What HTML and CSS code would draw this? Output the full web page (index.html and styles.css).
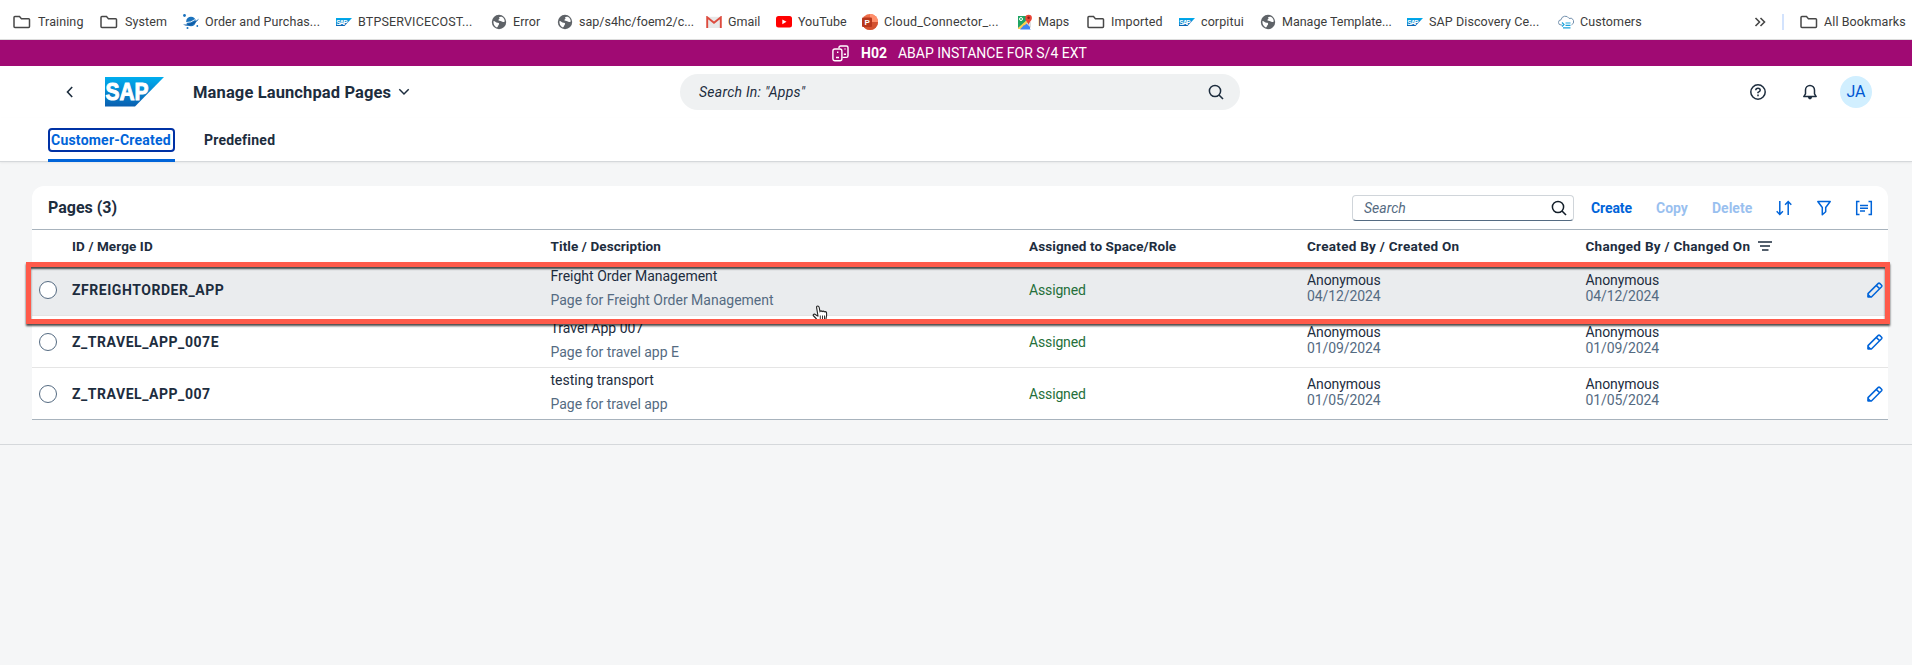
FILE: index.html
```
<!DOCTYPE html>
<html lang="en">
<head>
<meta charset="utf-8">
<title>Manage Launchpad Pages</title>
<link rel="stylesheet" href="styles.css">
</head>
<body>
<svg class="defs" width="0" height="0" aria-hidden="true">
  <defs>
    <linearGradient id="sapblue" x1="0" y1="0" x2="0" y2="1"><stop offset="0" stop-color="#00aeef"/><stop offset="1" stop-color="#0a5fb0"/></linearGradient>
    <symbol id="folder" viewBox="0 0 18 14"><path d="M1.900 1.600h4.600l1.900 2.100h7.200q.9 0 .9.9v6.900q0 .9-.9.900H1.900q-.9 0-.9-.9V2.500q0-.9.9-.9z" fill="none" stroke="#474747" stroke-width="1.500"/></symbol>
    <symbol id="globe" viewBox="0 0 16 16"><circle cx="8" cy="8" r="7.200" fill="#5f6368"/><path d="M2.500 7c2 .2 2.400 2 4.200 1.800 1.600-.1 1.800 1.400.8 2.400-.8.700-.4 1.700-1.700 2.200C3.600 12.400 2 10 2.500 7zM8 3.300c1.200-.9 2.400-.7 3.200-.2 1.600 1 2.600 2.700 2.500 4.400-1 1-2.500.6-3.400-.2-1-.6-2.800 0-2.800-1.300.1-1 .9-1 1.200-1.500-.2-.4-.6-.6-.7-1.200z" fill="#fff"/></symbol>
    <symbol id="minisap" viewBox="0 0 16 8"><path d="M0 0h16L8.500 8H0z" fill="url(#sapblue)"/><text x=".3" y="6.500" font-size="6.500" font-weight="900" fill="#fff" textLength="11.500" font-family="Liberation Sans">SAP</text></symbol>
    <symbol id="pencil" viewBox="0 0 16 16"><path d="M1 15v-3.400L11.300 1.400q.7-.6 1.400 0l1.900 1.900q.6.700 0 1.400L4.400 15zM9.300 3.400l3.300 3.300" fill="none" stroke="#0064d9" stroke-width="1.500" stroke-linejoin="round"/><path d="M1 11.500L4.500 15H.6z" fill="#0064d9"/></symbol>
    <symbol id="lens" viewBox="0 0 16 16"><circle cx="7" cy="7" r="5.600" fill="none" stroke="currentColor" stroke-width="1.500"/><path d="M11 11l4 4" stroke="currentColor" stroke-width="1.600"/></symbol>
  </defs>
</svg>
<nav class="bookmarks">
  <a class="bm w1"><svg width="18" height="14"><use href="#folder"/></svg><span>Training</span></a>
  <a class="bm w2"><svg width="18" height="14"><use href="#folder"/></svg><span>System</span></a>
  <a class="bm w3"><svg width="16" height="16" viewBox="0 0 16 16"><circle cx="8" cy="7.500" r="4.800" fill="#1b72bd"/><path d="M0 10.500C4 11 12 8.500 16 4.500 13 9.500 6 14 0 10.500z" fill="#0d5aa5"/><path d="M3 8.600q5 0 9-3" stroke="#fff" stroke-width=".9" fill="none"/><circle cx="1.500" cy="1.500" r="1.400" fill="#1b72bd"/><circle cx="4.500" cy="14" r="1" fill="#1b72bd"/><circle cx="14.300" cy="12" r=".9" fill="#1b72bd"/></svg><span>Order and Purchas...</span></a>
  <a class="bm w4"><svg width="16" height="8"><use href="#minisap"/></svg><span>BTPSERVICECOST...</span></a>
  <a class="bm w5"><svg width="16" height="16"><use href="#globe"/></svg><span>Error</span></a>
  <a class="bm w6"><svg width="16" height="16"><use href="#globe"/></svg><span>sap/s4hc/foem2/c...</span></a>
  <a class="bm w7"><svg width="16" height="12" viewBox="0 0 16 12"><path d="M1 .8h14V12H1z" fill="#e8e8e8"/><path d="M1.200 12V1.300L8 6.800l6.800-5.500V12" fill="none" stroke="#dd4b3e" stroke-width="1.900"/></svg><span>Gmail</span></a>
  <a class="bm w8"><svg width="16" height="12" viewBox="0 0 16 12"><rect width="16" height="11.500" rx="2.500" fill="#f00"/><path d="M6.300 3.400v4.800l4.200-2.400z" fill="#fff"/></svg><span>YouTube</span></a>
  <a class="bm w9"><svg width="16" height="16" viewBox="0 0 16 16"><circle cx="8" cy="8" r="8" fill="#ed6c47"/><path d="M8 0a8 8 0 0 1 8 8H8z" fill="#ff8f6b"/><path d="M0 8h16a8 8 0 0 1-16 0z" fill="#d35230"/><rect y="3.500" width="10" height="9.500" rx="1" fill="#b7371c"/><text x="2.400" y="11" font-size="8" font-weight="700" fill="#fff" font-family="Liberation Sans">P</text></svg><span>Cloud_Connector_...</span></a>
  <a class="bm w10"><svg width="16" height="16" viewBox="0 0 16 16"><path d="M1 2h12v13H1z" fill="#4285f4"/><path d="M1 2h9L8 8l-7 6z" fill="#1fa463"/><path d="M1 14L12 4v3l-8 8H1z" fill="#ffd04b"/><path d="M7 11l7 4.500H3z" fill="#4285f4"/><path d="M9 9l5 5V8z" fill="#ddd"/><circle cx="4" cy="5" r="1.500" fill="none" stroke="#fff"/><path d="M11.500 11C11 8 8.300 7 8.300 4a3.300 3.300 0 0 1 6.600 0c0 3-2.900 4-3.400 7z" fill="#ea4335"/><circle cx="11.600" cy="3.800" r="1.200" fill="#8c1d18"/></svg><span>Maps</span></a>
  <a class="bm w11"><svg width="18" height="14"><use href="#folder"/></svg><span>Imported</span></a>
  <a class="bm w12"><svg width="16" height="8"><use href="#minisap"/></svg><span>corpitui</span></a>
  <a class="bm w13"><svg width="16" height="16"><use href="#globe"/></svg><span>Manage Template...</span></a>
  <a class="bm w14"><svg width="16" height="8"><use href="#minisap"/></svg><span>SAP Discovery Ce...</span></a>
  <a class="bm w15"><svg width="16" height="14" viewBox="0 0 16 14"><path d="M4 10H3.200A2.600 2.600 0 0 1 3 4.800 4.300 4.300 0 0 1 11 3.400 3.400 3.400 0 0 1 13.500 9.800" fill="none" stroke="#7390ad" stroke-width="1"/><path d="M4 7.500l2 2-2 2M7.500 8h5M7.500 10.300h5M5 12.800h7.500" fill="none" stroke="#1ba3dc" stroke-width="1.200"/></svg><span>Customers</span></a>
  <svg class="more" width="12" height="10" viewBox="0 0 12 10"><path d="M1.500 1l4 4-4 4M6.500 1l4 4-4 4" fill="none" stroke="#474747" stroke-width="1.600"/></svg>
  <i class="bar"></i>
  <a class="bm w16"><svg width="18" height="14"><use href="#folder"/></svg><span>All Bookmarks</span></a>
</nav>
<div class="banner">
  <svg width="17" height="17" viewBox="0 0 17 17" fill="none" stroke="#fff" stroke-width="1.400"><rect x=".9" y="4" width="9" height="11.800" rx="2"/><path d="M7 3.300V2.600Q7 1 8.600 1h5.800Q16 1 16 2.600v8.200q0 1.600-1.600 1.600H10.500M4 12.500h3M11.800 9.300h2.200M5 7.200h1.400M12.500 4h1"/></svg>
  <b>H02</b><span>ABAP INSTANCE FOR S/4 EXT</span>
</div>
<header class="shell">
  <div class="left">
    <svg class="back" width="8" height="12" viewBox="0 0 8 12"><path d="M6.200 1L1.500 6l4.700 5" fill="none" stroke="#1d2d3e" stroke-width="1.600"/></svg>
    <svg class="logo" width="59" height="30" viewBox="0 0 59 30"><path d="M0 0h59L30 29.500H0z" fill="url(#sapblue)"/><text x="0.500" y="23" font-size="24" font-weight="900" fill="#fff" stroke="#fff" stroke-width="1" textLength="43" lengthAdjust="spacingAndGlyphs" font-family="Liberation Sans">SAP</text></svg>
    <h1>Manage Launchpad Pages</h1>
    <svg class="chev" width="12" height="8" viewBox="0 0 12 8"><path d="M1.300 1.200L6 6l4.700-4.800" fill="none" stroke="#1d2d3e" stroke-width="1.500"/></svg>
  </div>
  <div class="bigsearch"><span>Search In: "Apps"</span><svg width="16" height="16"><use href="#lens"/></svg></div>
  <div class="right">
    <svg width="16" height="16" viewBox="0 0 16 16" fill="none" stroke="#1d2d3e" stroke-width="1.500"><circle cx="8" cy="8" r="7.200"/><path d="M5.800 6.200Q5.800 4.300 8 4.300t2.200 1.900Q10.200 7.500 8 8.400v.8M8 10.600v1.600"/></svg>
    <svg class="bell" width="16" height="16" viewBox="0 0 16 16"><path d="M1.800 12.600h12.400L12.500 9.800V6a4.500 4.500 0 0 0-9 0v3.800z" fill="none" stroke="#1d2d3e" stroke-width="1.500" stroke-linejoin="round"/><path d="M5.800 13h4.400q-.4 2.400-2.200 2.400T5.800 13z" fill="#1d2d3e"/></svg>
    <div class="avatar">JA</div>
  </div>
</header>
<div class="tabs">
  <div class="tab active"><span>Customer-Created</span></div>
  <div class="tab"><span>Predefined</span></div>
</div>
<main>
  <section class="card">
    <div class="toolbar">
      <h2>Pages (3)</h2>
      <div class="search"><span>Search</span><svg width="16" height="16"><use href="#lens"/></svg></div>
      <span class="btn create">Create</span><span class="btn off copy">Copy</span><span class="btn off del">Delete</span>
      <svg class="sort" width="16" height="16" viewBox="0 0 16 16" fill="none" stroke="#0064d9" stroke-width="1.500"><path d="M3.800 1v13.500M.7 11.300l3.100 3.200 3.100-3.200M12.200 15V1.500M9.100 4.700l3.100-3.200 3.100 3.200"/></svg>
      <svg class="filter" width="16" height="16" viewBox="0 0 16 16"><path d="M1.800 1.500h12.400L9.700 7.500v4.300l-3.400 2.900V7.500z" fill="none" stroke="#0064d9" stroke-width="1.500" stroke-linejoin="round"/></svg>
      <svg class="group" width="18" height="16" viewBox="0 0 18 16" fill="none" stroke="#0064d9" stroke-width="1.500"><path d="M4.500 1.500H1.700v13h2.800M13.500 1.500h2.800v13h-2.800M5 5.500h8M5 8.200h8M5 10.900h5"/></svg>
    </div>
    <div class="row head"><span></span><span>ID / Merge ID</span><span>Title / Description</span><span>Assigned to Space/Role</span><span>Created By / Created On</span><span class="sorted">Changed By / Changed On<svg width="14" height="10" viewBox="0 0 14 10"><path d="M0 1h14M2 5h10M4 9h6.500" stroke="#1d2d3e" stroke-width="1.400"/></svg></span></div>
    <div class="row item hover"><i class="radio"></i><b>ZFREIGHTORDER_APP</b><div class="two"><p>Freight Order Management</p><p class="sub">Page for Freight Order Management</p></div><span class="ok">Assigned</span><div class="who"><p>Anonymous</p><p class="sub">04/12/2024</p></div><div class="who"><p>Anonymous</p><p class="sub">04/12/2024</p></div><svg width="16" height="16"><use href="#pencil"/></svg></div>
    <div class="row item"><i class="radio"></i><b>Z_TRAVEL_APP_007E</b><div class="two"><p>Travel App 007</p><p class="sub">Page for travel app E</p></div><span class="ok">Assigned</span><div class="who"><p>Anonymous</p><p class="sub">01/09/2024</p></div><div class="who"><p>Anonymous</p><p class="sub">01/09/2024</p></div><svg width="16" height="16"><use href="#pencil"/></svg></div>
    <div class="row item last"><i class="radio"></i><b>Z_TRAVEL_APP_007</b><div class="two"><p>testing transport</p><p class="sub">Page for travel app</p></div><span class="ok">Assigned</span><div class="who"><p>Anonymous</p><p class="sub">01/05/2024</p></div><div class="who"><p>Anonymous</p><p class="sub">01/05/2024</p></div><svg width="16" height="16"><use href="#pencil"/></svg></div>
    <svg class="cursor" width="16" height="18" viewBox="0 0 16 18"><path d="M6 11L4.600 2.600Q4.500 1 5.700 1T7.200 2.500L8 6.500q1-1.200 2.200 0 1.200-.9 2.200.3 1.500-.5 2.100.8.600 2.500-.5 6L13.500 17H6.500Q4.500 13.500 1.200 10.500 1 9 2.600 9L5.500 11z" fill="#fff" stroke="#222" stroke-width="1.100"/><path d="M8.300 10.500V14M10.500 10.500V14M12.500 10.500V14" stroke="#222" stroke-width=".9"/></svg>
    <div class="callout"></div>
  </section>
</main>
</body>
</html>
```
FILE: styles.css
```
* { box-sizing: border-box; }
body { margin: 0; width: 1912px; height: 665px; overflow: hidden; background: #f5f6f7; font-family: Roboto, "Liberation Sans", sans-serif; font-size: 14px; color: #1d2d3e; }
h1, h2, p { margin: 0; }
svg { display: block; flex: none; }
.defs { position: absolute; }
span, b, h1, h2, p { white-space: nowrap; }

.bookmarks { display: flex; align-items: center; height: 40px; padding: 4px 0 0 13px; background: #fff; border-bottom: 1px solid #dcdcdc; font-size: 12.5px; color: #3c3c3c; letter-spacing: .1px; }
.bm { display: flex; align-items: center; gap: 6px; flex: none; }
.w1 { width: 87px; gap: 7px; }
.w2 { width: 83px; gap: 7px; }
.w3 { width: 153px; }
.w4 { width: 155px; letter-spacing: .15px; }
.w5 { width: 66px; }
.w6 { width: 149px; letter-spacing: 0; }
.w7 { width: 70px; letter-spacing: 0; }
.w8 { width: 86px; letter-spacing: 0; }
.w9 { width: 155px; letter-spacing: .2px; }
.w10 { width: 70px; gap: 5px; letter-spacing: 0; }
.w11 { width: 92px; }
.w12 { width: 81px; }
.w13 { width: 147px; letter-spacing: 0; }
.w14 { width: 151px; }
.w15 { width: 196px; }
.bar { width: 2px; height: 16px; margin: 0 16px; background: #d3e3fd; }

.banner { display: flex; align-items: center; height: 26px; padding-left: 832px; background: #a00a73; color: #fff; font-size: 14px; }
.banner b { margin: 0 11px 0 12px; }

.shell { display: flex; align-items: center; height: 52px; background: #fff; }
.left { display: flex; align-items: center; width: 680px; padding-left: 66px; }
.logo { margin-left: 31px; }
h1 { margin-left: 29px; font-size: 16.5px; font-weight: 700; letter-spacing: .12px; }
.chev { margin-left: 7px; }
.bigsearch { display: flex; align-items: center; justify-content: space-between; width: 560px; height: 36px; padding: 0 16px 0 19px; border-radius: 18px; background: #eff1f2; font-style: italic; letter-spacing: .25px; }
.right { display: flex; align-items: center; margin-left: 510px; }
.bell { margin-left: 36px; }
.avatar { width: 32px; height: 32px; margin-left: 22px; border-radius: 50%; background: #d1efff; color: #0057d2; font-size: 16px; line-height: 32px; text-align: center; }

.tabs { display: flex; height: 44px; padding-left: 48px; background: #fff; border-bottom: 1px solid #d5d8db; box-shadow: 0 1px 2px rgba(0,0,0,.06); font-weight: 700; letter-spacing: .22px; }
.tab { height: 44px; padding-top: 10px; margin-right: 26px; }
.tab span { display: block; height: 24px; padding: 0 1px; line-height: 21px; border: 2px solid transparent; border-radius: 4px; }
.active { width: 127px; border-bottom: 3px solid #0064d9; color: #0064d9; }
.active span { border-color: #0032a5; }

main { height: 283px; padding: 24px 24px 0 32px; border-bottom: 1px solid #d5d8db; }
.card { position: relative; width: 1856px; height: 234px; background: #fff; border-radius: 12px 12px 0 0; border-bottom: 1px solid #a8b3bd; }
.toolbar { display: flex; align-items: center; height: 44px; padding-left: 16px; border-bottom: 1px solid #a8b3bd; }
h2 { width: 1304px; font-size: 16px; }
.search { display: flex; align-items: center; justify-content: space-between; width: 222px; height: 26px; padding: 0 6px 0 11px; border: 1px solid #d0d5da; border-bottom-color: #556b82; border-radius: 4px; color: #556b82; font-style: italic; }
.search svg { color: #131e29; }
.btn { color: #0064d9; font-weight: 700; }
.off { opacity: .4; }
.create { width: 65px; margin-left: 17px; letter-spacing: -.1px; }
.copy { width: 56px; }
.del { width: 64px; }
.filter { margin-left: 24px; }
.group { margin-left: 23px; }

.row { display: grid; grid-template-columns: 40px 478.500px 478.500px 278px 278.500px 283px 18px; align-items: center; }
.head { height: 34px; padding-bottom: 1px; font-weight: 700; font-size: 13.5px; border-bottom: 1px solid #e5e5e5; letter-spacing: .1px; }
.head span:nth-child(n+5) { letter-spacing: .28px; }
.sorted { display: flex; align-items: center; gap: 8px; }
.item { height: 52px; border-bottom: 1px solid #e5e5e5; }
.item.last { height: 51px; border-bottom: 0; }
.item b { letter-spacing: .55px; }
.item > svg { margin-left: -2px; }
.hover { background: #eaecee; }
.radio { width: 18px; height: 18px; margin-left: 7px; border: 1px solid #556b82; border-radius: 50%; background: #fff; }
.sub { color: #556b82; }
.two p { line-height: 24px; }
.two { padding-bottom: 3px; }
.who p { line-height: 16px; }
.who { padding-bottom: 4px; letter-spacing: -.1px; }
.ok { color: #256f3a; letter-spacing: -.15px; }

.callout { position: absolute; left: -6px; top: 76px; width: 1864px; height: 62px; border: 5px solid #ff5a4a; box-shadow: 0 2px 2px rgba(0,0,0,.7), inset 0 2px 2px rgba(0,0,0,.7); }
.cursor { position: absolute; left: 780px; top: 119px; }
```
